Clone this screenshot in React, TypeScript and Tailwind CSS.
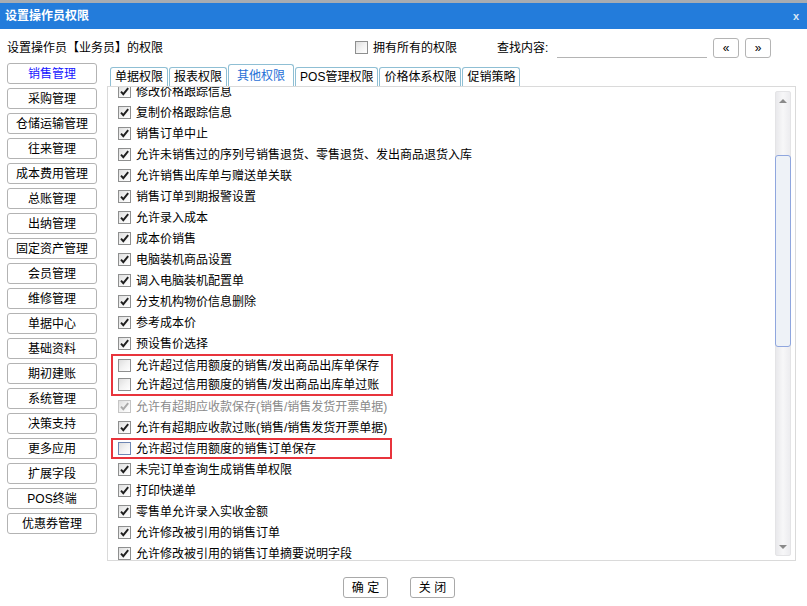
import React from 'react'

const FONT = { fontFamily: '"Liberation Sans", "Noto Sans CJK SC", sans-serif' }

const modules = [
	'销售管理',
	'采购管理',
	'仓储运输管理',
	'往来管理',
	'成本费用管理',
	'总账管理',
	'出纳管理',
	'固定资产管理',
	'会员管理',
	'维修管理',
	'单据中心',
	'基础资料',
	'期初建账',
	'系统管理',
	'决策支持',
	'更多应用',
	'扩展字段',
	'POS终端',
	'优惠券管理'
]

const tabs = ['单据权限', '报表权限', '其他权限', 'POS管理权限', '价格体系权限', '促销策略']

type Perm = { label: string; checked: boolean; disabled?: boolean; focus?: boolean }

const before: Perm[] = [
	{ label: '修改价格跟踪信息', checked: true },
	{ label: '复制价格跟踪信息', checked: true },
	{ label: '销售订单中止', checked: true },
	{ label: '允许未销售过的序列号销售退货、零售退货、发出商品退货入库', checked: true },
	{ label: '允许销售出库单与赠送单关联', checked: true },
	{ label: '销售订单到期报警设置', checked: true },
	{ label: '允许录入成本', checked: true },
	{ label: '成本价销售', checked: true },
	{ label: '电脑装机商品设置', checked: true },
	{ label: '调入电脑装机配置单', checked: true },
	{ label: '分支机构物价信息删除', checked: true },
	{ label: '参考成本价', checked: true },
	{ label: '预设售价选择', checked: true }
]

const creditA: Perm[] = [
	{ label: '允许超过信用额度的销售/发出商品出库单保存', checked: false },
	{ label: '允许超过信用额度的销售/发出商品出库单过账', checked: false }
]

const middle: Perm[] = [
	{ label: '允许有超期应收款保存(销售/销售发货开票单据)', checked: true, disabled: true },
	{ label: '允许有超期应收款过账(销售/销售发货开票单据)', checked: true }
]

const after: Perm[] = [
	{ label: '未完订单查询生成销售单权限', checked: true },
	{ label: '打印快递单', checked: true },
	{ label: '零售单允许录入实收金额', checked: true },
	{ label: '允许修改被引用的销售订单', checked: true },
	{ label: '允许修改被引用的销售订单摘要说明字段', checked: true }
]

function Box({ checked, disabled, focus }: { checked: boolean; disabled?: boolean; focus?: boolean }) {
	const border = disabled ? 'border-[#c4c4c4]' : focus ? 'border-[#6f87b3]' : 'border-[#8e8f8f]'
	return (
		<span
			className={`flex w-[13px] h-[13px] shrink-0 items-center justify-center border ${border} bg-gradient-to-br from-[#dedede] via-[#f2f2f2] to-white`}
		>
			{checked && (
				<svg width="11" height="11" viewBox="0 0 11 11">
					<path
						d="M2 5.6 L4.3 8.2 L9.2 2.2"
						fill="none"
						stroke={disabled ? '#a9a9a9' : '#1e1e1e'}
						strokeWidth="1.9"
					/>
				</svg>
			)}
		</span>
	)
}

function Row({ p, h = 'h-[21px]' }: { p: Perm; h?: string }) {
	return (
		<div className={`flex ${h} items-center gap-[5px] whitespace-nowrap`}>
			<Box checked={p.checked} disabled={p.disabled} focus={p.focus} />
			<span className={p.disabled ? 'text-[#8a8a8a]' : 'text-black'}>{p.label}</span>
		</div>
	)
}

function Scrollbar() {
	return (
		<div className="mt-[4px] mb-[4px] mr-[4px] flex w-[16px] flex-col rounded-[2px] border border-[#e4e4e6] bg-gradient-to-r from-[#e9e9ec] via-[#f7f7f8] to-[#ececef]">
			<div className="flex h-[17px] items-center justify-center">
				<span className="h-0 w-0 border-x-[4px] border-b-[4px] border-x-transparent border-b-[#8a8a8a]" />
			</div>
			<div className="h-[46px]" />
			<div className="mx-[-1px] h-[192px] rounded-[3px] border border-[#8fa6de] bg-[#eef2f7]" />
			<div className="flex-1" />
			<div className="flex h-[17px] items-center justify-center">
				<span className="h-0 w-0 border-x-[4px] border-t-[4px] border-x-transparent border-t-[#8a8a8a]" />
			</div>
		</div>
	)
}

export default function App() {
	return (
		<div className="flex h-[606px] w-[807px] flex-col overflow-hidden bg-white text-[12px] leading-none text-black" style={FONT}>
			{/* strip of the window behind */}
			<div className="h-[3px] bg-[#a7acb2]" />

			{/* Title bar */}
			<div className="flex h-[26px] items-center justify-between bg-[#237cdb] pl-[5px] pr-[8px]">
				<span className="text-[12px] font-bold text-white">设置操作员权限</span>
				<span className="text-[11px] font-bold text-[#dbe7f5]">x</span>
			</div>

			{/* Header */}
			<div className="mt-[8px] flex h-[21px] items-center pl-[7px] whitespace-nowrap">
				<span className="w-[348px]">设置操作员【业务员】的权限</span>
				<label className="flex w-[142px] items-center gap-[5px]">
					<Box checked={false} />
					<span>拥有所有的权限</span>
				</label>
				<span className="w-[60px]">查找内容:</span>
				<div className="h-[18px] w-[150px] self-end border-b border-[#b4b4b4]" />
				<button className="ml-[6px] flex h-[20px] w-[26px] items-center justify-center rounded-[3px] border border-[#b4b4b4] bg-white text-[12px]">
					«
				</button>
				<button className="ml-[6px] flex h-[20px] w-[26px] items-center justify-center rounded-[3px] border border-[#b4b4b4] bg-white text-[12px]">
					»
				</button>
			</div>

			{/* Body */}
			<div className="mt-[5px] flex pl-[7px]">
				{/* Module list */}
				<div className="flex w-[90px] flex-col gap-[4px]">
					{modules.map((m, i) => (
						<div
							key={m}
							className={`flex h-[21px] items-center justify-center rounded-[3px] border border-[#b3b3b3] bg-white ${
								i === 0 ? 'text-[#1515ff]' : 'text-black'
							}`}
						>
							{m}
						</div>
					))}
				</div>

				{/* Tabs + panel */}
				<div className="ml-[10px] flex w-[689px] flex-col pt-[1px]">
					<div className="flex h-[22px] items-end gap-[1px] pl-[3px]">
						{tabs.map((t, i) => {
							const active = i === 2
							return (
								<div
									key={t}
									className={`flex items-center rounded-t-[3px] border border-b-0 border-[#8fbfd4] bg-white ${
										active ? 'mb-[-1px] h-[23px] px-[8px] text-[#1f6fd6]' : 'h-[19px] px-[4px]'
									}`}
								>
									{t}
								</div>
							)
						})}
					</div>
					<div className="flex h-[475px] overflow-hidden border border-[#dadada]">
						<div className="flex-1 overflow-hidden">
							<div className="-mt-[6px] flex flex-col">
								<div className="pl-[10px]">
									{before.map((p) => (
										<Row key={p.label} p={p} />
									))}
								</div>
								<div className="ml-[3px] h-[42px] w-[282px] border-2 border-[#e8343c] pl-[5px]">
									{creditA.map((p) => (
										<Row key={p.label} p={p} h="h-[19px]" />
									))}
								</div>
								<div className="pl-[10px]">
									{middle.map((p) => (
										<Row key={p.label} p={p} />
									))}
								</div>
								<div className="ml-[3px] h-[21px] w-[281px] border-2 border-[#e8343c] pl-[5px]">
									<Row p={{ label: '允许超过信用额度的销售订单保存', checked: false, focus: true }} h="h-[17px]" />
								</div>
								<div className="pl-[10px]">
									{after.map((p) => (
										<Row key={p.label} p={p} />
									))}
								</div>
							</div>
						</div>
						<Scrollbar />
					</div>
				</div>
			</div>

			{/* Footer */}
			<div className="mt-[16px] flex justify-center gap-[22px] pr-[9px]">
				<button className="flex h-[21px] w-[45px] items-center justify-center rounded-[3px] border border-[#a9a9a9] bg-white text-[12px]">
					确 定
				</button>
				<button className="flex h-[21px] w-[45px] items-center justify-center rounded-[3px] border border-[#a9a9a9] bg-white text-[12px]">
					关 闭
				</button>
			</div>
		</div>
	)
}
